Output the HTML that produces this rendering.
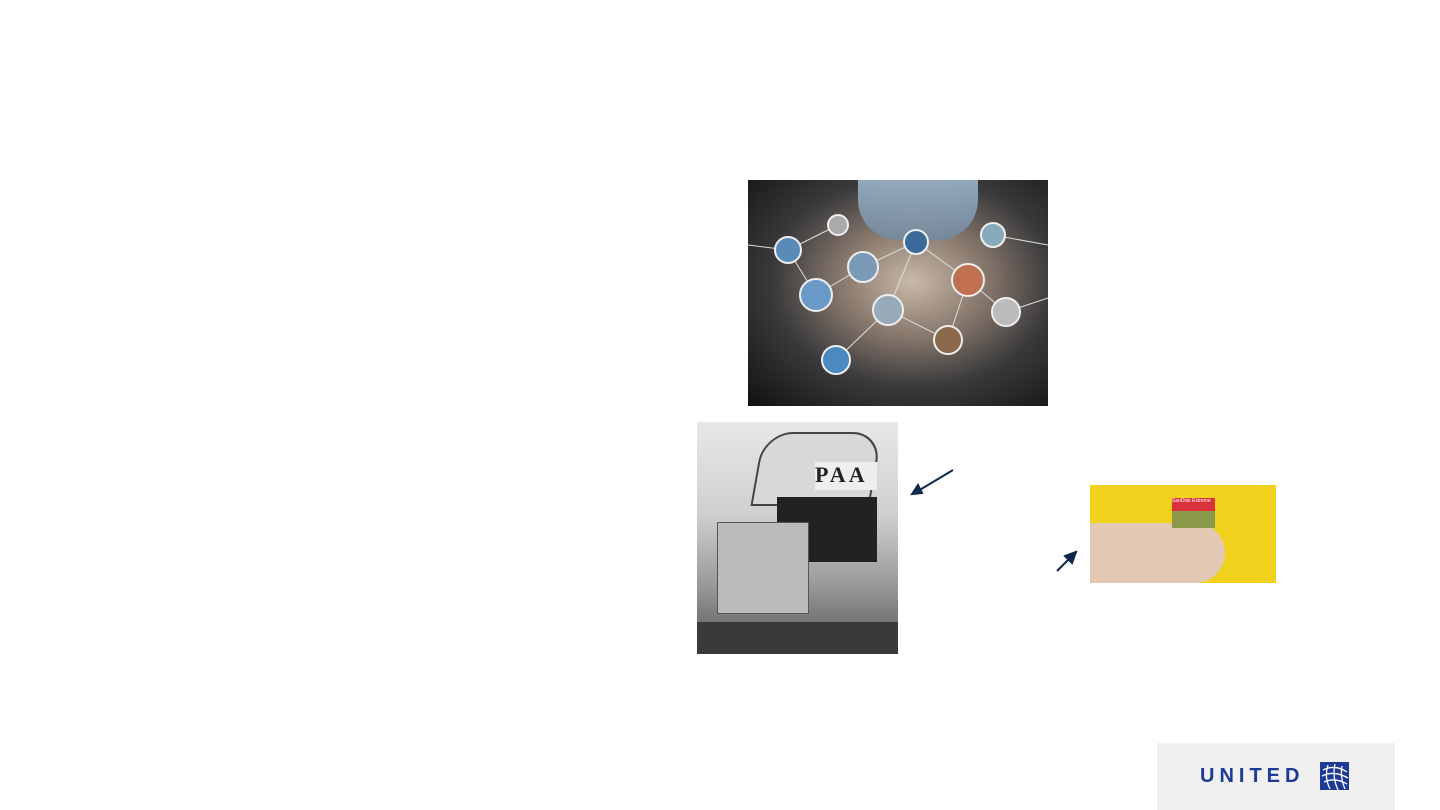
<!DOCTYPE html>
<html><head><style>
body{margin:0;width:1440px;height:810px;background:#fff;position:relative;overflow:hidden;font-family:"Liberation Sans",sans-serif}
.a{position:absolute}
</style></head><body>
<div class="a" style="left:748px;top:180px;width:300px;height:226px;background:radial-gradient(ellipse at 55% 45%,#c9b9a8 0%,#8a7a6e 30%,#3a3a3c 60%,#111 100%)">
<div class="a" style="left:110px;top:0;width:120px;height:60px;background:linear-gradient(#a9c4dc,#6f8aa4);border-radius:0 0 40px 40px;opacity:.8"></div>
<svg class="a" width="300" height="226" style="left:0;top:0">
<g stroke="#ddd" stroke-width="1" fill="none"><path d="M0 65 L40 70 L68 115 L115 87 L168 62 L220 100 L258 132 L300 118 M140 130 L168 62 M140 130 L200 160 L220 100 M88 180 L140 130 M245 55 L300 65 M40 70 L90 45"/></g>
<g stroke="#eee" stroke-width="2">
<circle cx="40" cy="70" r="13" fill="#5a8ab8"/><circle cx="90" cy="45" r="10" fill="#aaa"/><circle cx="115" cy="87" r="15" fill="#7a9ab8"/><circle cx="68" cy="115" r="16" fill="#6a9ac8"/><circle cx="168" cy="62" r="12" fill="#3a6a9a"/><circle cx="220" cy="100" r="16" fill="#c07050"/><circle cx="245" cy="55" r="12" fill="#8ab"/><circle cx="140" cy="130" r="15" fill="#9ab"/><circle cx="200" cy="160" r="14" fill="#8a6a4a"/><circle cx="258" cy="132" r="14" fill="#bbb"/><circle cx="88" cy="180" r="14" fill="#4a8ac0"/></g>
</svg></div>
<div class="a" style="left:697px;top:422px;width:201px;height:232px;background:linear-gradient(180deg,#e8e8e8 0%,#cfcfcf 40%,#9a9a9a 70%,#555 100%)">
<div class="a" style="left:60px;top:10px;width:115px;height:70px;background:#d8d8d8;border:2px solid #444;border-radius:30px 30px 0 0;transform:skewX(-10deg)"></div>
<div class="a" style="left:118px;top:40px;width:62px;height:28px;background:#eee;font:bold 22px 'Liberation Serif',serif;color:#222;letter-spacing:3px">PAA</div>
<div class="a" style="left:80px;top:75px;width:100px;height:65px;background:#222"></div>
<div class="a" style="left:20px;top:100px;width:90px;height:90px;background:#bbb;border:1px solid #555"></div>
<div class="a" style="left:0;top:200px;width:201px;height:32px;background:#3a3a3a"></div>
</div>
<svg class="a" width="1440" height="810" style="left:0;top:0">
<g stroke="#10294a" stroke-width="2" fill="#10294a">
<line x1="953" y1="470" x2="918" y2="491"/><path d="M912 494 L918 485 L922 493 Z"/>
<line x1="1057" y1="571" x2="1071" y2="557"/><path d="M1076 552 L1065 556 L1072 563 Z"/>
</g></svg>
<div class="a" style="left:1090px;top:485px;width:186px;height:98px;background:#f0d21c">
<div class="a" style="left:0;top:38px;width:135px;height:60px;background:#e3c9b3;border-radius:0 30px 30px 0"></div>
<div class="a" style="left:82px;top:13px;width:43px;height:30px;background:#8a9a4a"></div>
<div class="a" style="left:82px;top:13px;width:43px;height:13px;background:#d8333a;font-size:5px;color:#fff">SanDisk Extreme</div>
</div>
<div class="a" style="left:1157px;top:743px;width:238px;height:67px;background:#f0f0f0">
<div class="a" style="left:43px;top:23px;font-weight:bold;font-size:20px;letter-spacing:5px;color:#1d3a94;line-height:20px">UNITED</div>
<svg class="a" width="29" height="28" style="left:163px;top:19px"><rect width="29" height="28" fill="#1d3a94"/><g stroke="#fff" stroke-width="1.3" fill="none"><path d="M3 8 Q15 2 27 10 M2 14 Q14 8 28 16 M4 20 Q15 15 27 22 M8 3 Q4 15 10 27 M15 2 Q12 15 18 28 M22 4 Q20 16 25 27"/></g></svg>
</div>
</body></html>
